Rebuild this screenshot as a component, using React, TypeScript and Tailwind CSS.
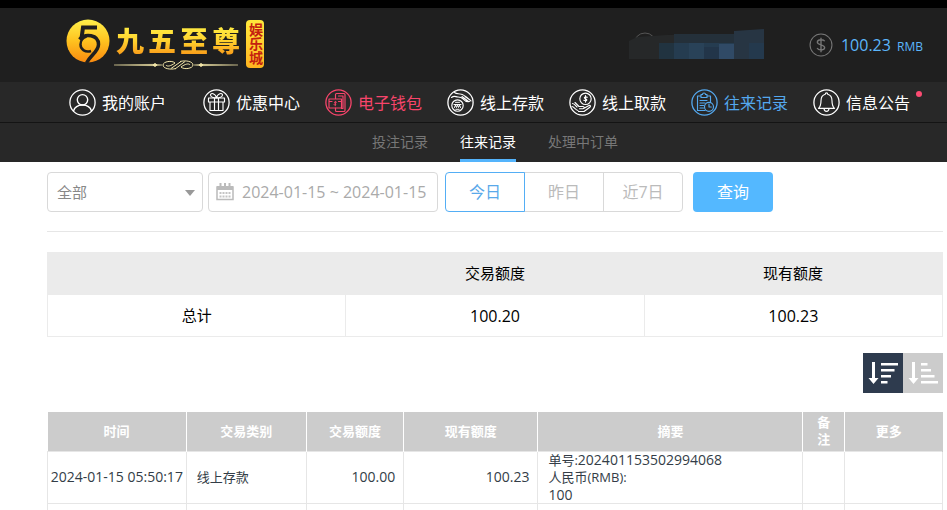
import type { ReactNode } from 'react';
import clsx from 'clsx';

type NavItem = { label: string; icon: ReactNode; color: string; dot?: boolean };

const IconFrame = ({ children }: { children: ReactNode }): JSX.Element => (
  <svg
    viewBox="0 0 27 27"
    className="size-[27px] shrink-0"
    fill="none"
    stroke="currentColor"
    strokeWidth="1.15"
    strokeLinecap="round"
    strokeLinejoin="round"
    aria-hidden="true"
  >
    <circle cx="13.5" cy="13.5" r="12.6" strokeWidth="1.3" />
    {children}
  </svg>
);

const UserIcon = (
  <IconFrame>
    <circle cx="13.5" cy="10.8" r="5.2" strokeWidth="1.4" />
    <path d="M4.5 22c1.200-4 4-6 9-6s7.800 2 9 6" strokeWidth="1.4" />
  </IconFrame>
);

const GiftIcon = (
  <IconFrame>
    <path d="M5.500 9h16v4h-16zM7 13h13v8.500H7zM11.500 9v12.500M15.500 9v12.500" />
    <path d="M13.500 9C11 9 7.500 8 7.500 6 7.500 3.500 12.500 4 13.500 9c1-5 6-5.500 6-3C19.500 8 16 9 13.500 9z" />
  </IconFrame>
);

const WalletIcon = (
  <IconFrame>
    <path d="M10.500 9.500V5.500a1 1 0 0 1 1-1h7.500a1 1 0 0 1 1 1V21.500a1 1 0 0 1-1 1h-7.500a1 1 0 0 1-1-1V19" />
    <path d="M4 10h12.500v9H4zM4 12.500h3M13.500 12.500h3M13.500 7h4.500v12.500h-1.500" />
    <path d="M11.500 13.200c-1.800-.8-2.800.6-1.400 1.200s1 1.900-1.100 1.300M10.300 12.300v4.500" strokeWidth=".9" />
  </IconFrame>
);

const DepositIcon = (
  <IconFrame>
    <circle cx="10.500" cy="16.500" r="5.700" />
    <path d="M7 15.500h7M7.500 18.500l1-2.500 1 2.500 1-2.500 1 2.500 1-2.500 1 2.500M8.500 13.300h4M8.800 20.300h3.400" strokeWidth="1" />
    <path d="M7.500 3.500c2 1.500 3.500 1 6 1.500 4 .7 7 4 10.500 7M4.500 8.500c3-2.500 4-.5 6.500-.5s3.500 0 5 1.800 3.500 3.200 6.500 2.700M15 7.500l6.500 5M18 7.500l5 3.500" />
  </IconFrame>
);

const WithdrawIcon = (
  <IconFrame>
    <circle cx="16.500" cy="9.800" r="5.700" />
    <path d="M18.200 8.300c-2.200-1.200-4 .6-1.700 1.500s1.300 2.600-1.700 1.500M16.500 6.500v6.600" />
    <path d="M3.500 14.500c2 0 3 2 4.500 3.500M3 17.500c2 0 3.500 3.500 6 4M6 13.500l4 4h4c1.500 0 1.500 2.200 0 2.200H10.500M14.500 19.500l5.500-3c1.500-.5 2 1 .8 1.800L15 22.500H9.500" />
  </IconFrame>
);

const RecordIcon = (
  <IconFrame>
    <path d="M14 21.500H6.500V7h3.500M16 7h3.500v5.500M10 5.500h1.500c0-2 3-2 3 0H16V8.500h-6z" />
    <path d="M9 11.500h7M9 14h5M9 16.500h3.500M9 19h3.500" />
    <circle cx="18" cy="17.800" r="4.500" />
    <path d="M18 15V18h2.300" />
  </IconFrame>
);

const BellIcon = (
  <IconFrame>
    <path d="M12.300 5.200c0-1.700 2.400-1.700 2.400 0 3.200.8 4.300 3.200 4.300 6.500 0 4.300.8 6 2.500 7.600h-16C7.200 17.700 8 16 8 11.700c0-3.300 1.100-5.700 4.300-6.500z" />
    <path d="M11 19.500c.2 3.800 4.800 3.800 5 0" />
  </IconFrame>
);

const NAV: NavItem[] = [
  { label: '我的账户', icon: UserIcon, color: 'text-white' },
  { label: '优惠中心', icon: GiftIcon, color: 'text-white' },
  { label: '电子钱包', icon: WalletIcon, color: 'text-[#f7456b]' },
  { label: '线上存款', icon: DepositIcon, color: 'text-white' },
  { label: '线上取款', icon: WithdrawIcon, color: 'text-white' },
  { label: '往来记录', icon: RecordIcon, color: 'text-[#54a8ee]' },
  { label: '信息公告', icon: BellIcon, color: 'text-white', dot: true },
];

const SUB_NAV = ['投注记录', '往来记录', '处理中订单'];
const RANGES = ['今日', '昨日', '近7日'];

const COLUMNS = [
  { label: '时间', width: 'w-[15.5%] px-2' },
  { label: '交易类别', width: 'w-[13.4%] px-2' },
  { label: '交易额度', width: 'w-[10.9%] px-2' },
  { label: '现有额度', width: 'w-[15%] px-2' },
  { label: '摘要', width: 'w-[29.6%] px-2' },
  { label: '备注', width: 'w-[4.7%] px-2' },
  { label: '更多', width: 'w-[10.9%] pr-2.5' },
];

const Logo = (): JSX.Element => (
  <a href="#" className="flex items-center">
    <svg viewBox="0 0 44 44" className="mb-1.5 size-11" aria-hidden="true">
      <defs>
        <linearGradient id="gold" x1="0" y1="0" x2="0" y2="1">
          <stop offset="0" stopColor="#fff04a" />
          <stop offset=".5" stopColor="#ffc21f" />
          <stop offset="1" stopColor="#f98a10" />
        </linearGradient>
      </defs>
      <circle cx="22" cy="22" r="21.500" fill="url(#gold)" />
      <g fill="none" stroke="#1f1f1f">
        <path d="M31 8.500H17L15.500 19.500" strokeWidth="4" />
        <path
          d="M13.500 20.500C19 14 32.500 15.500 32.500 25.500c0 7-7.500 10-12 18.500"
          strokeWidth="3.500"
        />
        <path d="M25 32c-5.500 2-10.500-1.500-10.500-6.500 0-3.500 2.500-7 6-8" strokeWidth="2.500" />
      </g>
    </svg>
    <span className="ml-1 flex flex-col pt-1.5">
      <span className="flex gap-1 pl-0.5 text-[28px] leading-9 font-black">
        {['九', '五', '至', '尊'].map(char => (
          <span
            key={char}
            className="bg-linear-to-b from-[#fff347] via-[#ffd22e] to-[#f58a12] bg-clip-text text-transparent"
          >
            {char}
          </span>
        ))}
      </span>
      <svg
        viewBox="0 0 124 12"
        className="h-3 w-[124px]"
        fill="none"
        stroke="#f3e6a8"
        aria-hidden="true"
      >
        <path d="M0 6l40-.7 8 .7-8 .7zM124 6l-36-.7-8 .7 8 .7z" fill="#f3e6a8" strokeWidth=".4" />
        <path d="M62 9.500c-6 1.500-13 0-13-3.500s9-5 12-2c-4 3-8 4-9 2M66 2.500c6-1.500 13 0 13 3.500s-9 5-12 2c4-3 8-4 9-2M57 9.500l10-7M61 10l10-7.500" />
        <path d="M39 6l2-1.500L43 6l-2 1.500zM85 6l2-1.500L89 6l-2 1.500z" fill="#f3e6a8" />
      </svg>
    </span>
    <span className="ml-1.5 flex h-12 w-[18px] items-center justify-center rounded bg-linear-to-b from-[#ffe93c] to-[#ffb41f] text-sm leading-[18px] font-bold text-[#c4200f] [writing-mode:vertical-rl]">
      娱乐城
    </span>
  </a>
);

const HiddenUser = (): JSX.Element => (
  <svg viewBox="0 0 136 32" className="h-8 w-[136px]" aria-hidden="true">
    <circle cx="16" cy="15" r="11" fill="none" stroke="#555" />
    <path d="M0 12l8-4 30-2 67-1V30H0z" fill="#262829" />
    <path d="M30 14h15v16H30z" fill="#213340" />
    <path d="M45 14h60v16H45z" fill="#253c50" />
    <path d="M45 5h60v9H45z" fill="#24303a" />
    <path d="M60 14h15v16H60z" fill="#294258" />
    <path d="M75 18h15v12H75z" fill="#223549" />
    <path d="M90 15h15v15H90z" fill="#304a66" />
    <path d="M105 2l30-2v30h-30z" fill="#273543" />
    <path d="M120 14h15v16h-15z" fill="#24394d" />
  </svg>
);

const Header = (): JSX.Element => (
  <header className="border-t-8 border-black bg-[#1f1f1f]">
    <div className="flex h-[74px] items-center justify-between pr-6 pb-0.5 pl-[66px]">
      <Logo />
      <div className="flex items-center gap-11 pt-0.5">
        <HiddenUser />
        <div className="flex items-center gap-2">
          <svg viewBox="0 0 23 23" className="size-6" fill="none" stroke="#777" aria-hidden="true">
            <circle cx="11.500" cy="11.500" r="10.500" />
            <path
              d="M15 8c-1-2.300-7-2-7 .8 0 3 7 2 7 5.200 0 3-6 3-7.200.3M11.500 4.500v14"
              strokeWidth="1.300"
            />
          </svg>
          <span className="text-base leading-6 text-[#5cb6fb]">
            100.23 <span className="ml-0.5 text-xs">RMB</span>
          </span>
        </div>
      </div>
    </div>
    <nav className="flex h-10 items-center gap-[25px] bg-[#282828] pl-[69px]">
      {NAV.map(({ label, icon, color, dot }) => (
        <a
          key={label}
          href="#"
          className={clsx('relative flex items-center gap-1.5 first:mr-3', color)}
        >
          {icon}
          <span className="pt-0.5 text-base leading-6 whitespace-nowrap">{label}</span>
          {dot && <span className="absolute top-0.5 -right-3 size-1.5 rounded-full bg-[#fb4b72]" />}
        </a>
      ))}
    </nav>
    <nav className="flex h-10 justify-center gap-8 border-t border-[#141414] bg-[#282828] pr-1 pl-[47px] text-sm">
      {SUB_NAV.map(label => (
        <a
          key={label}
          href="#"
          className={clsx(
            'border-b-[3px] pt-[9px]',
            label === '往来记录'
              ? 'border-[#54b4fc] text-white'
              : 'border-transparent text-[#777]',
          )}
        >
          {label}
        </a>
      ))}
    </nav>
  </header>
);

const Filters = (): JSX.Element => (
  <form className="flex items-center border-b border-[#e6e6e6] pb-[19px]">
    <div className="relative">
      <select
        aria-label="交易类别"
        className="h-10 w-[156px] appearance-none rounded border border-[#d9d9d9] bg-white px-[9px] text-[15px] text-[#888]"
      >
        <option>全部</option>
      </select>
      <svg
        viewBox="0 0 10 6"
        className="pointer-events-none absolute top-[18px] right-2 h-1.5 w-2.5"
        aria-hidden="true"
      >
        <path d="M0 0h10L5 6z" fill="#999" />
      </svg>
    </div>
    <label className="ml-[5px] flex h-10 w-[230px] items-center gap-2 rounded border border-[#d9d9d9] pr-1 pl-[7px]">
      <svg viewBox="0 0 18 18" className="size-[18px] shrink-0" aria-hidden="true">
        <path d="M1 4h16v12.500H1z" fill="none" stroke="#bbb" strokeWidth="1.500" />
        <path d="M1 3h16v4H1zM3.500 0h2v4h-2zM8 0h2v4H8zM12.500 0h2v4h-2z" fill="#bbb" />
        <path
          d="M3.500 9h2v2h-2zM6.500 9h2v2h-2zM9.500 9h2v2h-2zM12.500 9h2v2h-2zM3.500 12.500h2v2h-2zM6.500 12.500h2v2h-2zM9.500 12.500h2v2h-2zM12.500 12.500h2v2h-2z"
          fill="#c4c4c4"
        />
      </svg>
      <input
        type="text"
        aria-label="日期"
        defaultValue="2024-01-15 ~ 2024-01-15"
        className="w-full min-w-0 text-base text-[#aaa]"
      />
    </label>
    <div className="ml-[7px] flex text-base">
      {RANGES.map(range => (
        <button
          key={range}
          type="button"
          className={clsx(
            'h-10 w-20 border first:rounded-l last:rounded-r not-first:-ml-px',
            range === '今日' ? 'z-10 border-[#54aef5] text-[#5aa9ea]' : 'border-[#d9d9d9] text-[#bbb]',
          )}
        >
          {range}
        </button>
      ))}
    </div>
    <button type="submit" className="ml-2.5 h-10 w-20 rounded bg-[#54b8ff] text-base text-white">
      查询
    </button>
  </form>
);

const Summary = (): JSX.Element => (
  <table className="mt-5 w-full table-fixed border-collapse border border-[#ebebeb] text-center text-[15px] text-black">
    <thead>
      <tr className="h-[42px] bg-[#ebebeb]">
        <th />
        <th className="font-normal">交易额度</th>
        <th className="font-normal">现有额度</th>
      </tr>
    </thead>
    <tbody>
      <tr className="h-[42px]">
        <td className="border border-[#ebebeb]">总计</td>
        <td className="border border-[#ebebeb] text-base">100.20</td>
        <td className="border border-[#ebebeb] text-base">100.23</td>
      </tr>
    </tbody>
  </table>
);

const SortButtons = (): JSX.Element => (
  <div className="mt-4 flex justify-end">
    <button type="button" aria-label="降序" className="size-10 bg-[#2e3b4e]">
      <svg viewBox="0 0 40 40" fill="#fff">
        <path d="M9 9h3v16h3.500l-5 6-5-6H9zM18 10h17v2.500H18zM18 16h13.500v2.500H18zM18 22h10v2.500H18zM18 28h6.500v2.500H18z" />
      </svg>
    </button>
    <button type="button" aria-label="升序" className="size-10 bg-[#ccc]">
      <svg viewBox="0 0 40 40" fill="#fff">
        <path d="M9 9h3v16h3.500l-5 6-5-6H9zM18 10h6.500v2.500H18zM18 16h10v2.500H18zM18 22h13.500v2.500H18zM18 28h17v2.500H18z" />
      </svg>
    </button>
  </div>
);

const Records = (): JSX.Element => (
  <table className="mt-[19px] w-full table-fixed border-collapse text-[13px] leading-[17px] text-[#333d47]">
    <thead>
      <tr className="h-[39px] bg-[#ccc] text-white">
        {COLUMNS.map(({ label, width }) => (
          <th
            key={label}
            className={clsx('border-r border-white font-bold last:border-r-[#ccc]', width)}
          >
            {label}
          </th>
        ))}
      </tr>
    </thead>
    <tbody>
      <tr className="h-[51px]">
        <td className="border border-[#e6e6e6] text-center text-sm whitespace-nowrap">
          2024-01-15 05:50:17
        </td>
        <td className="border border-[#e6e6e6] px-2.5">线上存款</td>
        <td className="border border-[#e6e6e6] px-2 text-right text-sm">100.00</td>
        <td className="border border-[#e6e6e6] px-2 text-right text-sm">100.23</td>
        <td className="border border-[#e6e6e6] px-2.5">
          <p>
            单号:<span className="text-sm leading-none">202401153502994068</span>
          </p>
          <p>人民币(RMB):</p>
          <p className="text-sm leading-[17px]">100</p>
        </td>
        <td className="border border-[#e6e6e6]" />
        <td className="border border-[#e6e6e6]" />
      </tr>
      <tr className="h-[7px]">
        {COLUMNS.map(({ label }) => (
          <td key={label} className="border-x border-[#e6e6e6]" />
        ))}
      </tr>
    </tbody>
  </table>
);

const App = (): JSX.Element => (
  <div className="min-h-screen bg-white font-['Open_Sans','Noto_Sans_CJK_SC',sans-serif]">
    <Header />
    <main className="pt-2.5 pr-1 pl-[47px]">
      <Filters />
      <Summary />
      <SortButtons />
      <Records />
    </main>
  </div>
);

export default App;
